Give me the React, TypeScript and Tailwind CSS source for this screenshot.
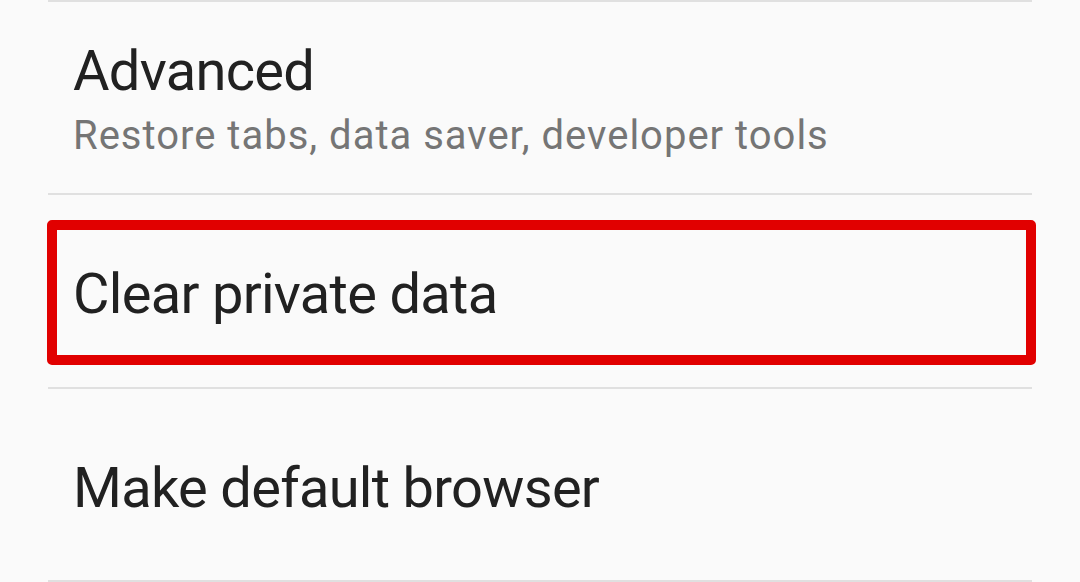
import React from "react";

const rows = [
	{ title: "Advanced", subtitle: "Restore tabs, data saver, developer tools" },
	{ title: "Clear private data", highlighted: true },
	{ title: "Make default browser" },
];

function Divider() {
	return <div className="h-[2px] bg-[#e0e0e0]" />;
}

export default function App() {
	return (
		<div className="h-[582px] w-full overflow-hidden bg-[#fafafa] font-['Roboto',sans-serif]">
			<div className="ml-[48px] w-[984px]">
				<Divider />

				{/* Advanced */}
				<div className="h-[191px] pl-[25px] pt-[41px]">
					<p className="text-[56px] leading-[56px] tracking-[-0.7px] text-[#212121]">
						{rows[0].title}
					</p>
					<p className="mt-[13px] text-[40px] leading-[48px] tracking-[1px] text-[#757575]">
						{rows[0].subtitle}
					</p>
				</div>
				<Divider />

				{/* Clear private data */}
				<div className="relative h-[192px] pl-[25px] pt-[71px]">
					<p className="text-[56px] leading-[56px] tracking-[-0.7px] text-[#212121]">
						{rows[1].title}
					</p>
					<div className="pointer-events-none absolute left-[-1px] top-[25px] h-[145px] w-[989px] rounded-[5px] border-[10px] border-[#e10000]" />
				</div>
				<Divider />

				{/* Make default browser */}
				<div className="h-[191px] pl-[25px] pt-[71px]">
					<p className="text-[56px] leading-[56px] tracking-[-0.7px] text-[#212121]">
						{rows[2].title}
					</p>
				</div>
				<Divider />
			</div>
		</div>
	);
}
